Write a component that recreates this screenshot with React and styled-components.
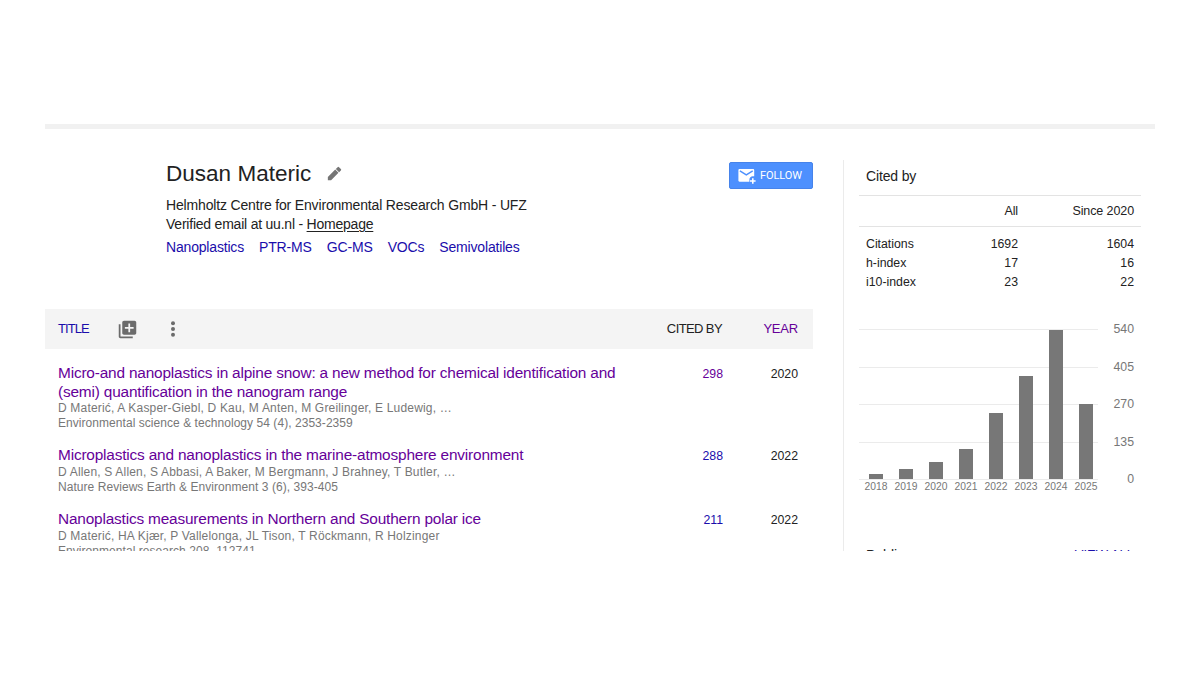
import styled, { createGlobalStyle } from "styled-components";

const GlobalStyle = createGlobalStyle`
  * {
    box-sizing: border-box;
  }

  body {
    margin: 0;
    background: #fff;
    color: #222;
    font-family: "Liberation Sans", Arial, sans-serif;
  }
`;

const interests = ["Nanoplastics", "PTR-MS", "GC-MS", "VOCs", "Semivolatiles"];

const articles = [
  {
    title: [
      "Micro-and nanoplastics in alpine snow: a new method for chemical identification and",
      "(semi) quantification in the nanogram range",
    ],
    authors: "D Materić, A Kasper-Giebl, D Kau, M Anten, M Greilinger, E Ludewig, …",
    journal: "Environmental science & technology 54 (4), 2353-2359",
    cited: 298,
    year: 2020,
    visited: true,
  },
  {
    title: ["Microplastics and nanoplastics in the marine-atmosphere environment"],
    authors: "D Allen, S Allen, S Abbasi, A Baker, M Bergmann, J Brahney, T Butler, …",
    journal: "Nature Reviews Earth & Environment 3 (6), 393-405",
    cited: 288,
    year: 2022,
  },
  {
    title: ["Nanoplastics measurements in Northern and Southern polar ice"],
    authors: "D Materić, HA Kjær, P Vallelonga, JL Tison, T Röckmann, R Holzinger",
    journal: "Environmental research 208, 112741",
    cited: 211,
    year: 2022,
  },
];

const stats = [
  { label: "Citations", all: 1692, since: 1604 },
  { label: "h-index", all: 17, since: 16 },
  { label: "i10-index", all: 23, since: 22 },
];

const ticks = [540, 405, 270, 135, 0];

const citations = [
  { year: 2018, count: 18 },
  { year: 2019, count: 37 },
  { year: 2020, count: 61 },
  { year: 2021, count: 108 },
  { year: 2022, count: 240 },
  { year: 2023, count: 372 },
  { year: 2024, count: 538 },
  { year: 2025, count: 271 },
];

const PencilIcon = () => (
  <svg width="17" height="17" viewBox="0 0 24 24" fill="#757575">
    <path d="M2.6 16.8V21.4h4.6L17.6 11l-4.6-4.6L2.6 16.8zM21 7.6a1.4 1.4 0 0 0 0-2L18.4 3a1.4 1.4 0 0 0-2 0l-2.5 2.5 4.6 4.6L21 7.6z" />
  </svg>
);

const MailPlusIcon = () => (
  <svg width="18" height="16" viewBox="0 0 18 16" fill="#fff">
    <path d="M1.6 0.9h13.4c.7 0 1.2.5 1.2 1.2V8.3h-1.4c-2 0-3.4 1.5-3.4 3.3v2.2H1.6c-.7 0-1.2-.5-1.2-1.2V2.1C.4 1.4.9.9 1.6.9z" />
    <path d="M1.9 2.9l6.4 4 6.4-4" fill="none" stroke="#4d90fe" strokeWidth="1.4" />
    <path d="M14 10.2h1.6v2h2v1.6h-2v2H14v-2h-2v-1.6h2z" />
  </svg>
);

const AddToIcon = () => (
  <svg width="21" height="21" viewBox="0 0 24 24" fill="#6b6b6b">
    <path d="M4 6H2v14c0 1.1.9 2 2 2h14v-2H4V6zm16-4H8c-1.1 0-2 .9-2 2v12c0 1.1.9 2 2 2h12c1.1 0 2-.9 2-2V4c0-1.1-.9-2-2-2zm-1 9h-4v4h-2v-4H9V9h4V5h2v4h4v2z" />
  </svg>
);

const MoreIcon = () => (
  <svg width="6" height="18" viewBox="0 0 6 18" fill="#6b6b6b">
    <circle cx="3" cy="3.2" r="2" />
    <circle cx="3" cy="9" r="2" />
    <circle cx="3" cy="14.8" r="2" />
  </svg>
);

const Profile = () => (
  <ProfileBox>
    <Info>
      <NameRow>
        <Name>Dusan Materic</Name>
        <PencilIcon />
      </NameRow>
      <InfoLine>Helmholtz Centre for Environmental Research GmbH - UFZ</InfoLine>
      <InfoLine>
        Verified email at uu.nl - <Homepage href="#">Homepage</Homepage>
      </InfoLine>
      <Interests>
        {interests.map((name) => (
          <Interest key={name} href="#">
            {name}
          </Interest>
        ))}
      </Interests>
    </Info>
    <FollowButton>
      <MailPlusIcon />
      FOLLOW
    </FollowButton>
  </ProfileBox>
);

const Articles = () => (
  <>
    <TableHead>
      <TitleHead>
        <HeadLabel $color="#1a0dab" $spacing="-0.9px">
          TITLE
        </HeadLabel>
        <AddToIcon />
        <MoreIcon />
      </TitleHead>
      <HeadLabel $spacing="-0.6px">CITED BY</HeadLabel>
      <HeadLabel $color="#660099">YEAR</HeadLabel>
    </TableHead>
    {articles.map((article) => (
      <Article key={article.cited}>
        <div>
          {article.title.map((line) => (
            <ArticleTitle key={line}>{line}</ArticleTitle>
          ))}
          <Authors>{article.authors}</Authors>
          <Meta>{article.journal}</Meta>
        </div>
        <Num $color={article.visited ? "#660099" : "#1a0dab"}>{article.cited}</Num>
        <Num>{article.year}</Num>
      </Article>
    ))}
  </>
);

const Chart = () => (
  <ChartBox>
    <Plot>
      <GridLines>
        {ticks.map((tick) => (
          <GridLine key={tick} />
        ))}
      </GridLines>
      <Bars>
        {citations.map(({ year, count }) => (
          <BarColumn key={year}>
            <Bar style={{ height: `${(count / 540) * 150}px` }} />
            <BarYear>{year}</BarYear>
          </BarColumn>
        ))}
      </Bars>
    </Plot>
    <Ticks>
      {ticks.map((tick) => (
        <span key={tick}>{tick}</span>
      ))}
    </Ticks>
  </ChartBox>
);

const App = () => {
  return (
    <>
      <GlobalStyle />
      <Page>
        <TopBar />
        <Columns>
          <Main>
            <Profile />
            <Articles />
          </Main>
          <Sidebar>
            <SideTitle>Cited by</SideTitle>
            <StatsHead>
              <span />
              <span>All</span>
              <span>Since 2020</span>
            </StatsHead>
            <Stats>
              {stats.map((row) => (
                <StatsRow key={row.label}>
                  <StatName>{row.label}</StatName>
                  <span>{row.all}</span>
                  <span>{row.since}</span>
                </StatsRow>
              ))}
            </Stats>
            <Chart />
            <AccessHead>
              <span>Public access</span>
              <ViewAll href="#">VIEW ALL</ViewAll>
            </AccessHead>
          </Sidebar>
        </Columns>
      </Page>
    </>
  );
};

export default App;

const Page = styled.div`
  height: 551px;
  padding: 124px 45px 0;
  overflow: hidden;
`;

const TopBar = styled.div`
  height: 5px;
  background: #f1f1f1;
`;

const Columns = styled.div`
  display: grid;
  grid-template-columns: 768px 298px;
  gap: 30px;
  padding-top: 31px;
`;

const Main = styled.main`
  min-width: 0;
`;

const ProfileBox = styled.section`
  display: flex;
  justify-content: space-between;
  align-items: flex-start;
  height: 149px;
  padding-left: 121px;
`;

const Info = styled.div`
  white-space: nowrap;
`;

const NameRow = styled.div`
  display: flex;
  align-items: center;
  gap: 15px;
  height: 27px;
  margin-bottom: 9px;
`;

const Name = styled.h1`
  margin: 0;
  font-size: 22.5px;
  font-weight: 400;
  letter-spacing: 0.02px;
`;

const InfoLine = styled.div`
  font-size: 14px;
  letter-spacing: -0.165px;
  line-height: 19px;

  & + & {
    letter-spacing: -0.22px;
  }
`;

const Homepage = styled.a`
  color: #222;
  text-underline-offset: 2px;
`;

const Interests = styled.div`
  display: flex;
  gap: 15.1px;
  margin-top: 4px;
`;

const Interest = styled.a`
  color: #1a0dab;
  font-size: 14px;
  letter-spacing: -0.18px;
  line-height: 19px;
  text-decoration: none;
`;

const FollowButton = styled.button`
  display: flex;
  align-items: center;
  gap: 4px;
  width: 84px;
  height: 27px;
  margin-top: 2px;
  padding: 0 0 0 8px;
  border: 1px solid #4683ea;
  border-radius: 2px;
  background: #4d90fe;
  color: #fff;
  font-family: Roboto, sans-serif;
  font-size: 11px;
  letter-spacing: -0.1px;
`;

const TableHead = styled.div`
  display: grid;
  grid-template-columns: 1fr 90px 76px;
  align-items: center;
  height: 40px;
  padding: 0 15px 0 13px;
  background: #f4f4f4;
  text-align: right;
`;

const TitleHead = styled.div`
  display: flex;
  align-items: center;

  svg:first-of-type {
    margin: 0 32px 0 28px;
  }
`;

const HeadLabel = styled.span`
  padding-bottom: 2px;
  color: ${({ $color }) => $color || "#222"};
  font-size: 13px;
  letter-spacing: ${({ $spacing }) => $spacing || "-0.2px"};
`;

const Article = styled.div`
  display: grid;
  grid-template-columns: 1fr 90px 75px;
  padding: 15px 15px 0 13px;
  white-space: nowrap;
`;

const ArticleTitle = styled.div`
  color: #660099;
  font-size: 15.4px;
  letter-spacing: -0.18px;
  line-height: 18.7px;
`;

const Meta = styled.div`
  color: #777;
  font-size: 12px;
  letter-spacing: 0.05px;
  line-height: 15px;
`;

const Authors = styled(Meta)`
  letter-spacing: 0.18px;
`;

const Num = styled.span`
  color: ${({ $color }) => $color || "#222"};
  font-size: 12.3px;
  line-height: 20px;
  text-align: right;
`;

const Sidebar = styled.aside`
  height: 420px;
  padding-left: 15px;
  border-left: 1px solid #ebebeb;
`;

const SideTitle = styled.div`
  height: 36px;
  padding: 7px 7px 0;
  border-bottom: 1px solid #e3e3e3;
  font-size: 14px;
  letter-spacing: -0.15px;
  line-height: 19px;
`;

const StatsHead = styled.div`
  display: grid;
  grid-template-columns: 82px 70px 1fr;
  height: 31px;
  padding: 0 7px;
  border-bottom: 1px solid #e3e3e3;
  font-size: 12.5px;
  letter-spacing: -0.1px;
  line-height: 31px;
  text-align: right;
`;

const Stats = styled.div`
  padding: 8px 7px 0;
`;

const StatsRow = styled.div`
  display: grid;
  grid-template-columns: 82px 70px 1fr;
  font-size: 12.3px;
  line-height: 18.8px;
  text-align: right;
`;

const StatName = styled.span`
  text-align: left;
`;

const ChartBox = styled.div`
  display: flex;
  justify-content: space-between;
  height: 170px;
  margin-top: 38px;
  padding-right: 7px;
`;

const Plot = styled.div`
  display: grid;
  flex: 0 0 239px;
  grid-template-columns: 239px;
`;

const GridLines = styled.div`
  display: flex;
  flex-direction: column;
  justify-content: space-between;
  grid-area: 1 / 1;
  height: 151px;
`;

const GridLine = styled.div`
  height: 1px;
  background: #ebebeb;
`;

const Bars = styled.div`
  display: flex;
  grid-area: 1 / 1;
  height: 165px;
  padding-left: 2px;
`;

const BarColumn = styled.div`
  display: flex;
  flex-direction: column;
  flex: 0 0 30px;
  align-items: center;
  justify-content: flex-end;
`;

const Bar = styled.div`
  width: 14px;
  background: #777;
`;

const BarYear = styled.span`
  color: #777;
  font-size: 10.3px;
  line-height: 15px;
`;

const Ticks = styled.div`
  display: flex;
  flex-direction: column;
  justify-content: space-between;
  height: 169px;
  margin-top: -9px;
  color: #777;
  font-size: 12.3px;
  line-height: 19px;
  text-align: right;
`;

const AccessHead = styled.div`
  display: flex;
  justify-content: space-between;
  margin-top: 47px;
  padding: 0 7px;
  font-size: 14px;
  line-height: 19px;
`;

const ViewAll = styled.a`
  color: #1a0dab;
  font-size: 13px;
  line-height: 18px;
  text-decoration: none;
`;
